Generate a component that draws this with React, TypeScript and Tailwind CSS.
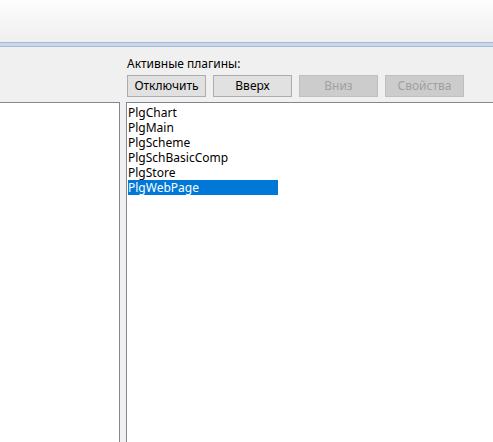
import React from "react";

const items = ["PlgChart", "PlgMain", "PlgScheme", "PlgSchBasicComp", "PlgStore", "PlgWebPage"];

function Btn({ label, disabled }: { label: string; disabled?: boolean }) {
  return (
    <div
      className={
        "w-[79px] h-[22px] flex items-center justify-center border text-[12px] " +
        (disabled
          ? "border-[#bfbfbf] bg-[#cccccc] text-[#a0a0a0]"
          : "border-[#adadad] bg-[#e1e1e1] text-black")
      }
    >
      {label}
    </div>
  );
}

export default function App() {
  return (
    <div
      className="w-[493px] h-[442px] overflow-hidden bg-[#f0f0f0] flex flex-col"
      style={{ fontFamily: '"Noto Sans", "Segoe UI", sans-serif' }}
    >
      <div className="h-[42px] bg-gradient-to-b from-[#fdfdfd] to-[#efefef]" />
      <div className="h-[5px] border-t border-b border-[#a9b8cf] bg-[#c9d8ec]" />
      <div className="flex flex-1 min-h-0">
        <div className="w-[120px] flex flex-col">
          <div className="h-[55px]" />
          <div className="flex-1 bg-white border-t border-r border-[#828790]" />
        </div>
        <div className="w-[6px]" />
        <div className="flex-1 flex flex-col">
          <div className="h-[28px] flex items-end pl-[1px] pb-[3px] text-[12px] leading-[16px] text-black">
            Активные плагины:
          </div>
          <div className="flex gap-[7px] pl-[1px]">
            <Btn label="Отключить" />
            <Btn label="Вверх" />
            <Btn label="Вниз" disabled />
            <Btn label="Свойства" disabled />
          </div>
          <div className="h-[5px]" />
          <div className="flex-1 bg-white border-t border-l border-[#828790] pt-[2px] pl-[1px]">
            {items.map((it) => (
              <div
                key={it}
                className={
                  "w-[150px] h-[15px] leading-[15px] text-[12px] overflow-hidden " +
                  (it === "PlgWebPage" ? "bg-[#0078d7] text-white" : "text-black")
                }
              >
                {it}
              </div>
            ))}
          </div>
        </div>
      </div>
    </div>
  );
}
